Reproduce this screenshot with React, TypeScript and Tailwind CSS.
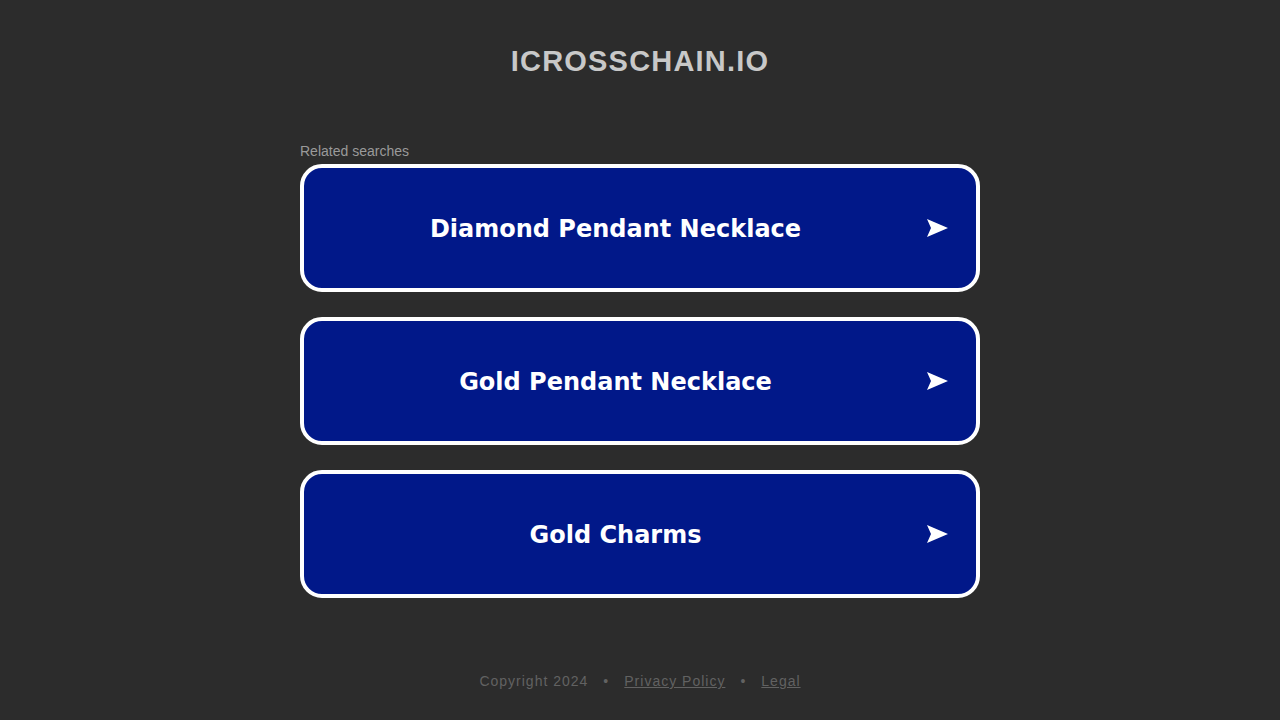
import React from 'react';

const searches = ['Diamond Pendant Necklace', 'Gold Pendant Necklace', 'Gold Charms'];

const Arrow = () => (
  <svg width="21" height="18" viewBox="0 0 21 18" className="shrink-0">
    <path d="M0 0 L21 9 L0 18 L4 9 Z" fill="#ffffff" />
  </svg>
);

const App = () => {
  return (
    <div className="min-h-screen bg-[#2c2c2c] flex flex-col items-center" style={{ fontFamily: '"Liberation Sans", Arial, sans-serif' }}>
      <h1 className="mt-[43px] text-[29px] leading-[36px] font-bold text-[#c8c8c8] tracking-[1.2px]">ICROSSCHAIN.IO</h1>

      <div className="w-[680px] mt-[64px]">
        <div className="text-[14px] leading-[16px] text-[#9a9a9a] mb-[5px]">Related searches</div>
        <div className="flex flex-col gap-[25px]">
          {searches.map((s) => (
            <a
              key={s}
              href="#"
              className="h-[128px] rounded-[22px] border-4 border-white bg-[#011889] flex items-center pl-[28px] pr-[28px]"
            >
              <span
                className="flex-1 text-center text-white font-bold text-[24px] leading-[30px] mr-[28px] pt-[1px]"
                style={{ fontFamily: '"DejaVu Sans", Verdana, sans-serif' }}
              >
                {s}
              </span>
              <Arrow />
            </a>
          ))}
        </div>
      </div>

      <div className="mt-[73px] text-[14px] tracking-[1px] text-[#626262] flex items-center gap-[15px]">
        <span>Copyright 2024</span>
        <span>•</span>
        <a href="#" className="underline">Privacy Policy</a>
        <span>•</span>
        <a href="#" className="underline">Legal</a>
      </div>
    </div>
  );
};

export default App;
